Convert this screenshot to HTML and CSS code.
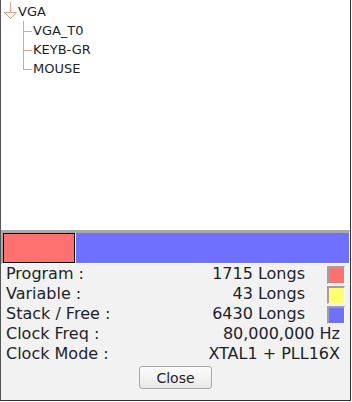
FILE: index.html
```html
<!doctype html>
<html lang="en">
<head>
    <meta charset="utf-8">
    <title>Memory Map</title>
    <link rel="stylesheet" href="styles.css">
</head>
<body>
    <div class="frame">
        <div class="tree">
            <div class="node root">
                <svg class="root-icon" width="13" height="19" viewBox="0 0 13 19">
                    <line x1="6.5" y1="0" x2="6.5" y2="10" />
                    <polygon points="0.5,10.5 12.5,10.5 6.5,16.5" />
                </svg>
                <span>VGA</span>
            </div>
            <div class="children">
                <div class="node child"><span class="tick"></span>VGA_T0</div>
                <div class="node child"><span class="tick"></span>KEYB-GR</div>
                <div class="node child last"><span class="tick"></span>MOUSE</div>
            </div>
        </div>

        <div class="bar">
            <div class="seg program" style="width: 72px"></div>
            <div class="seg variable" style="width: 1px"></div>
            <div class="seg stack"></div>
        </div>

        <div class="stats">
            <div class="row">
                <span class="label">Program :</span>
                <span class="value">1715 Longs</span>
                <span class="swatch red"></span>
            </div>
            <div class="row">
                <span class="label">Variable :</span>
                <span class="value">43 Longs</span>
                <span class="swatch yellow"></span>
            </div>
            <div class="row">
                <span class="label">Stack / Free :</span>
                <span class="value">6430 Longs</span>
                <span class="swatch blue"></span>
            </div>
            <div class="row plain">
                <span class="label">Clock Freq :</span>
                <span class="value">80,000,000 Hz</span>
            </div>
            <div class="row plain">
                <span class="label">Clock Mode :</span>
                <span class="value">XTAL1 + PLL16X</span>
            </div>
            <div class="actions">
                <button class="close">Close</button>
            </div>
        </div>
    </div>
</body>
</html>
```

FILE: styles.css
```css
html, body {
    margin: 0;
    padding: 0;
    background-color: #ffffff;
}

.frame {
    width: 351px;
    height: 401px;
    box-sizing: border-box;
    border-left: 1px solid #555;
    border-right: 1px solid #333;
    border-bottom: 1px solid #333;
    background-color: #f2f2f2;
    display: flex;
    flex-direction: column;
    font-family: "DejaVu Sans", sans-serif;
    color: #1e1e28;
}

/* tree */

.tree {
    height: 230px;
    background-color: #ffffff;
    padding-top: 2px;
    box-sizing: border-box;
    font-size: 13px;
}

.node {
    height: 19px;
    line-height: 19px;
    display: flex;
    align-items: center;
}

.root {
    padding-left: 3px;
}

.root-icon {
    margin-right: 1px;
    align-self: flex-start;
}

.root-icon line,
.root-icon polygon {
    stroke: #e3a28c;
    stroke-width: 1;
    fill: none;
}

.children {
    margin-left: 22px;
}

.child {
    position: relative;
    padding-left: 10px;
}

.child .tick {
    position: absolute;
    left: 0;
    top: 0;
    width: 8px;
    height: 10px;
    border-left: 1px solid #e3a28c;
    border-bottom: 1px solid #e3a28c;
}

.child:not(:first-child) .tick {
    top: -9px;
    height: 19px;
}

/* memory bar */

.bar {
    height: 34px;
    box-sizing: border-box;
    border-top: 3px solid #a9a9a9;
    border-left: 2px solid #a9a9a9;
    border-right: 1px solid #ffffff;
    border-bottom: 1px solid #ffffff;
    display: flex;
    background-color: #7070ff;
}

.seg {
    height: 100%;
    box-sizing: border-box;
}

.program {
    background-color: #ff7070;
    border: 1px solid #000;
}

.variable {
    background-color: #ffff70;
}

.stack {
    flex: 1;
    background-color: #7070ff;
}

/* stats */

.stats {
    font-size: 16px;
    padding-left: 5px;
}

.row {
    height: 20px;
    line-height: 20px;
    display: flex;
    align-items: flex-start;
    padding-right: 5px;
}

.row.plain {
    padding-right: 10px;
}

.label {
    flex: 1;
    white-space: nowrap;
}

.value {
    white-space: nowrap;
}

.swatch {
    width: 18px;
    height: 18px;
    box-sizing: border-box;
    margin-top: 2px;
    margin-left: 22px;
    border-top: 2px solid #a0a0a0;
    border-left: 2px solid #a0a0a0;
    border-right: 1px solid #ffffff;
    border-bottom: 1px solid #ffffff;
}

.swatch.red { background-color: #ff7070; }
.swatch.yellow { background-color: #ffff70; }
.swatch.blue { background-color: #7070ff; }

.actions {
    display: flex;
    justify-content: center;
    padding-top: 2px;
    padding-right: 5px;
}

.close {
    width: 73px;
    height: 23px;
    padding: 0;
    font-family: "DejaVu Sans", sans-serif;
    font-size: 14px;
    color: #1e1e28;
    border: 1px solid #a8a8a8;
    border-radius: 3px;
    background: linear-gradient(#fcfcfc, #e8e8e8);
}
```
